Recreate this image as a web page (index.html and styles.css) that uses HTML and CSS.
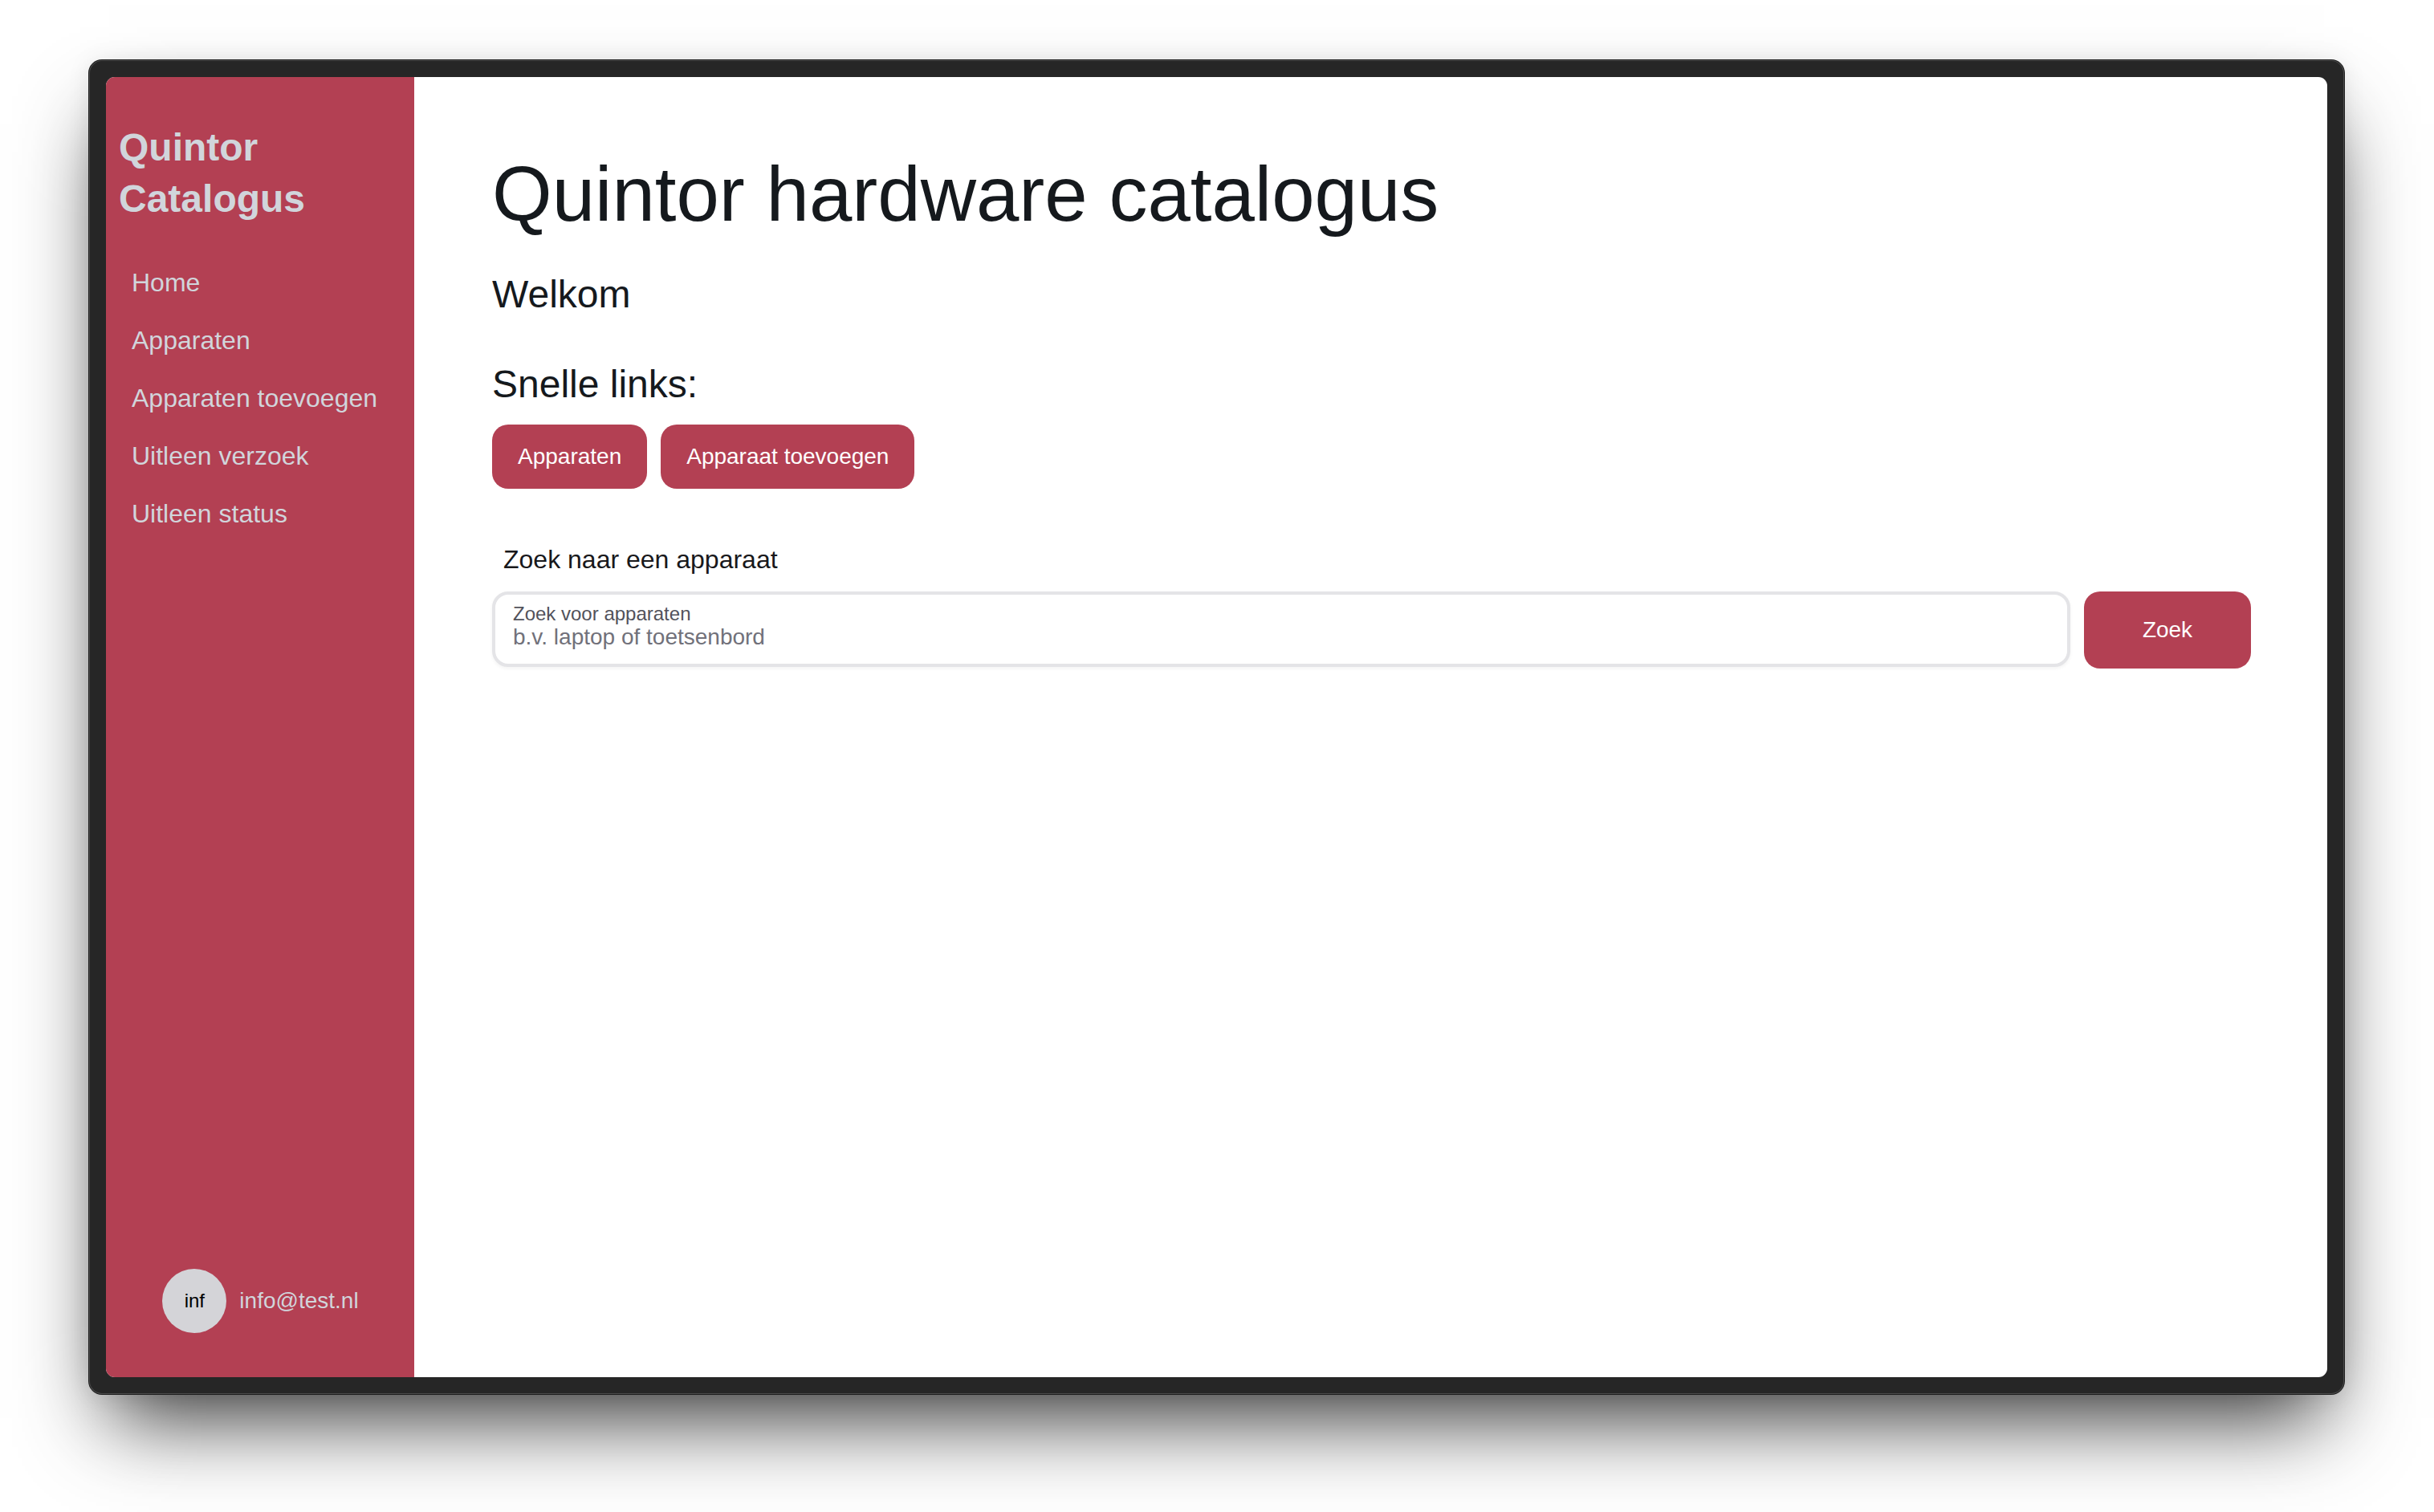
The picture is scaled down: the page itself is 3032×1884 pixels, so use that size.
FILE: index.html
```html
<!DOCTYPE html>
<html lang="nl">
<head>
<meta charset="utf-8">
<title>Quintor Catalogus</title>
<link rel="stylesheet" href="styles.css">
</head>
<body>
<div class="device">
  <div class="screen">
    <aside class="sidebar">
      <h2 class="brand">Quintor Catalogus</h2>
      <nav class="nav">
        <a class="nav-item" href="#">Home</a>
        <a class="nav-item" href="#">Apparaten</a>
        <a class="nav-item" href="#">Apparaten toevoegen</a>
        <a class="nav-item" href="#">Uitleen verzoek</a>
        <a class="nav-item" href="#">Uitleen status</a>
      </nav>
      <div class="user">
        <div class="avatar">inf</div>
        <span class="email">info@test.nl</span>
      </div>
    </aside>
    <main class="main">
      <h1 class="title">Quintor hardware catalogus</h1>
      <p class="welcome">Welkom</p>
      <h2 class="quick-title">Snelle links:</h2>
      <div class="quick-links">
        <a class="btn" href="#">Apparaten</a>
        <a class="btn" href="#">Apparaat toevoegen</a>
      </div>
      <section class="search">
        <p class="search-label">Zoek naar een apparaat</p>
        <div class="search-row">
          <label class="field">
            <span class="field-label">Zoek voor apparaten</span>
            <input class="field-input" type="text" placeholder="b.v. laptop of toetsenbord">
          </label>
          <button class="btn btn-search" type="button">Zoek</button>
        </div>
      </section>
    </main>
  </div>
</div>
</body>
</html>
```

FILE: styles.css
```css
* {
  box-sizing: border-box;
}

html, body {
  margin: 0;
  padding: 0;
  background: #ffffff;
}

body {
  font-family: "Liberation Sans", Arial, Helvetica, sans-serif;
  padding: 75px 112px 0 111px;
  width: 3032px;
  height: 1884px;
  overflow: hidden;
}

.device {
  width: 2809px;
  height: 1662px;
  padding: 21px;
  background: #262626;
  border-radius: 16px;
  box-shadow:
    inset 0 0 0 1px #4b4b4b,
    0 0 0 1px #1c1c1c,
    0 55px 100px -25px rgba(0, 0, 0, 0.8),
    0 0 30px rgba(0, 0, 0, 0.08);
}

.screen {
  display: flex;
  width: 100%;
  height: 100%;
  border-radius: 11px;
  overflow: hidden;
  background: #ffffff;
}

/* Sidebar */
.sidebar {
  width: 384px;
  flex: 0 0 384px;
  background: #b34053;
  display: flex;
  flex-direction: column;
  padding: 56px 15px 55px 16px;
}

.brand {
  margin: 0;
  font-size: 48px;
  line-height: 64px;
  font-weight: 700;
  color: #d1d5db;
}

.nav {
  margin-top: 36px;
  display: flex;
  flex-direction: column;
}

.nav-item {
  display: block;
  padding: 12px 16px;
  font-size: 32px;
  line-height: 48px;
  color: #d1d5db;
  text-decoration: none;
}

.user {
  margin-top: auto;
  display: flex;
  align-items: center;
  justify-content: center;
  gap: 16px;
}

.avatar {
  width: 80px;
  height: 80px;
  border-radius: 50%;
  background: #d4d4d8;
  color: #000000;
  font-size: 24px;
  line-height: 80px;
  text-align: center;
}

.email {
  font-size: 28px;
  line-height: 40px;
  color: #d1d5db;
}

/* Main */
.main {
  flex: 1;
  padding: 98px 95px 0 97px;
  color: #15191d;
}

.title {
  margin: 0;
  font-size: 96px;
  line-height: 96px;
  font-weight: 400;
  color: #15191d;
}

.welcome {
  margin: 45px 0 0;
  font-size: 48px;
  line-height: 64px;
}

.quick-title {
  margin: 48px 0 0;
  font-size: 48px;
  line-height: 64px;
  font-weight: 400;
}

.quick-links {
  margin-top: 18px;
  display: flex;
  gap: 17px;
}

.btn {
  display: inline-flex;
  align-items: center;
  justify-content: center;
  height: 80px;
  padding: 0 32px;
  border: none;
  border-radius: 20px;
  background: #b34053;
  color: #ffffff;
  font-family: "Liberation Sans", Arial, Helvetica, sans-serif;
  font-size: 28px;
  line-height: 40px;
  text-decoration: none;
}

.search-label {
  margin: 64px 0 0;
  padding-left: 14px;
  font-size: 32px;
  line-height: 48px;
  color: #18181b;
}

.search-row {
  margin-top: 16px;
  display: flex;
  align-items: flex-start;
  gap: 17px;
}

.field {
  flex: 1;
  height: 94px;
  display: flex;
  flex-direction: column;
  padding: 11px 22px 0;
  border: 4px solid #e4e4e7;
  border-radius: 20px;
  background: #ffffff;
  box-shadow: 0 2px 4px rgba(0, 0, 0, 0.05);
}

.field-label {
  font-size: 24px;
  line-height: 26px;
  color: #52525b;
}

.field-input {
  border: none;
  outline: none;
  padding: 0;
  margin: 0;
  height: 32px;
  font-family: "Liberation Sans", Arial, Helvetica, sans-serif;
  font-size: 28px;
  line-height: 32px;
  color: #27272a;
  background: transparent;
}

.field-input::placeholder {
  color: #71717a;
  opacity: 1;
}

.btn-search {
  width: 208px;
  height: 96px;
  padding: 0;
}
```
